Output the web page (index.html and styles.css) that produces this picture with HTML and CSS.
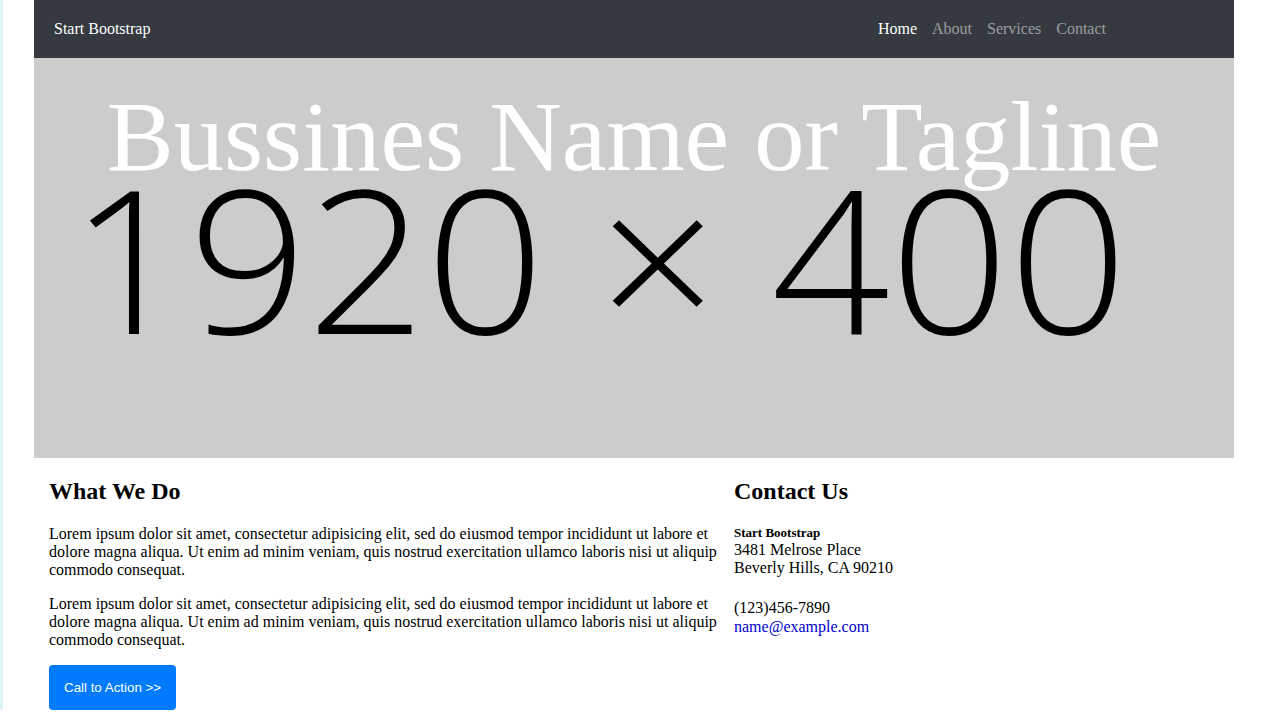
FILE: index.html
```html
<!DOCTYPE html>
<html>
<head>
<meta charset="utf-8">
<link rel="stylesheet" href="styles.css">
</head>
<body>
<div class="edge"></div>
<div class="page">
  <nav class="navbar">
    <a class="brand" href="#">Start Bootstrap</a>
    <ul class="nav-links">
      <li><a class="active" href="#">Home</a></li>
      <li><a href="#">About</a></li>
      <li><a href="#">Services</a></li>
      <li><a href="#">Contact</a></li>
    </ul>
  </nav>
  <header class="hero">
    <div class="placeholder">1920 × 400</div>
    <h1 class="tagline">Bussines Name or Tagline</h1>
  </header>
  <main class="content">
    <section class="main-col">
      <h2>What We Do</h2>
      <p>Lorem ipsum dolor sit amet, consectetur adipisicing elit, sed do eiusmod tempor incididunt ut labore et dolore magna aliqua. Ut enim ad minim veniam, quis nostrud exercitation ullamco laboris nisi ut aliquip commodo consequat.</p>
      <p>Lorem ipsum dolor sit amet, consectetur adipisicing elit, sed do eiusmod tempor incididunt ut labore et dolore magna aliqua. Ut enim ad minim veniam, quis nostrud exercitation ullamco laboris nisi ut aliquip commodo consequat.</p>
      <a class="btn" href="#">Call to Action &gt;&gt;</a>
    </section>
    <section class="side-col">
      <h2>Contact Us</h2>
      <address class="addr">
        <strong class="addr-name">Start Bootstrap</strong>
        <span>3481 Melrose Place</span>
        <span>Beverly Hills, CA 90210</span>
      </address>
      <address class="addr addr-contact">
        <span>(123)456-7890</span>
        <a href="#">name@example.com</a>
      </address>
    </section>
  </main>
</div>
</body>
</html>
```

FILE: styles.css
```css
html, body {
  margin: 0;
  padding: 0;
  background: #fff;
}
body {
  font-family: "Liberation Serif", "Times New Roman", serif;
  font-size: 16px;
  color: #000;
  position: relative;
}
.edge {
  position: absolute;
  left: 0;
  top: 0;
  width: 3px;
  height: 720px;
  background: #dff3fb;
}
.page {
  width: 1200px;
  margin: 0 0 0 34px;
}
.navbar {
  height: 58px;
  background: #343a40;
  display: flex;
  align-items: center;
  padding: 0 20px;
}
.brand {
  color: #fff;
  text-decoration: none;
  font-size: 16px;
}
.nav-links {
  list-style: none;
  margin: 0 108px 0 auto;
  padding: 0;
  display: flex;
  gap: 15px;
}
.nav-links a {
  color: rgba(255, 255, 255, 0.5);
  text-decoration: none;
  font-size: 16px;
}
.nav-links a.active {
  color: #fff;
}
.hero {
  height: 400px;
  background: #ccc;
  position: relative;
  overflow: hidden;
  display: flex;
  align-items: center;
  justify-content: center;
}
.placeholder {
  font-family: "Open Sans", sans-serif;
  font-weight: 300;
  font-size: 200px;
  color: #000;
  line-height: 1;
  margin: 0 70px 3px 0;
  white-space: nowrap;
  transform: scaleX(1.04);
}
.tagline {
  position: absolute;
  left: 0;
  right: 0;
  top: 28px;
  margin: 0;
  text-align: center;
  color: #fff;
  font-weight: normal;
  font-size: 100.5px;
  line-height: 1;
  white-space: nowrap;
}
.content {
  display: grid;
  grid-template-columns: 670px 1fr;
  column-gap: 15px;
  padding: 0 15px;
}
h2 {
  font-size: 24px;
  font-weight: bold;
  margin: 19px 0 20px;
  line-height: 28px;
}
p {
  margin: 0 0 16px;
  line-height: 18px;
}
.btn {
  display: inline-block;
  background: #007bff;
  color: #fff;
  font-family: "Liberation Sans", Arial, sans-serif;
  font-size: 13.33px;
  line-height: 15px;
  padding: 15px;
  border-radius: 4px;
  text-decoration: none;
}
.addr {
  font-style: normal;
  display: flex;
  flex-direction: column;
  line-height: 18px;
}
.addr-name {
  font-size: 13px;
  line-height: 16px;
}
.addr-contact {
  margin-top: 21px;
  line-height: 19px;
}
.addr-contact a {
  color: #0000cc;
  text-decoration: none;
}
```
